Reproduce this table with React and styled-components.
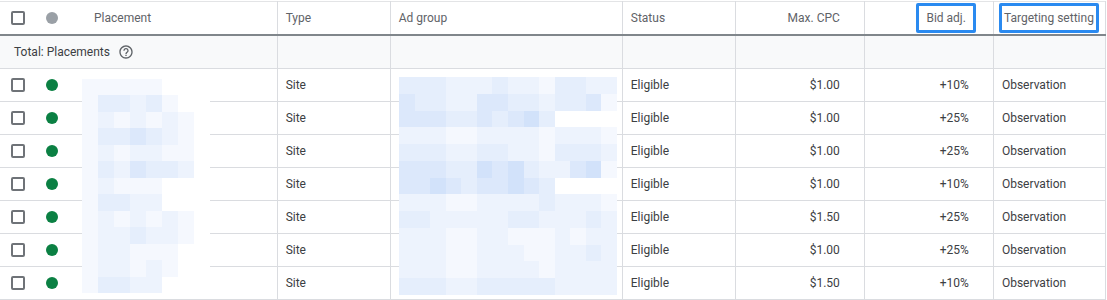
import styled, { createGlobalStyle } from 'styled-components';

const GlobalStyle = createGlobalStyle`
  body {
    margin: 0;
    background: #fff;
    font-family: Roboto, "Liberation Sans", Arial, sans-serif;
  }
`;

const rows = [
    { cpc: '$1.00', bid: '+10%' },
    { cpc: '$1.00', bid: '+25%' },
    { cpc: '$1.00', bid: '+25%' },
    { cpc: '$1.00', bid: '+10%' },
    { cpc: '$1.50', bid: '+25%' },
    { cpc: '$1.00', bid: '+25%' },
    { cpc: '$1.50', bid: '+10%' },
];

const shades = ['#ffffff', '#f5f8fe', '#edf3fd', '#e5eefc', '#dce8fb', '#d2e2fa'];

// pixelated blur that hides placement / ad group names
const placementCells = [
    '11111000',
    '13323100',
    '12121210',
    '13343210',
    '12122110',
    '13243320',
    '12111000',
    '13322000',
    '12121210',
    '12232210',
    '12211100',
    '12212100',
    '13322000',
];

const adGroupCells = [
    '33322232213322',
    '43322443323341',
    '44433434530000',
    '22211222212221',
    '33322332213332',
    '44433545322451',
    '44543445430000',
    '22211222232221',
    '33222223322232',
    '22211221112122',
    '22211222112232',
    '22211222212222',
    '33322333332222',
];

const Mosaic = ({ cells, left, top, width, height }) => (
    <MosaicGrid
        style={{ left, top, width, height }}
        $cols={cells[0].length}
        $rows={cells.length}
    >
        {cells.flatMap((row, r) =>
            row.split('').map((v, c) => <Cell key={`${r}-${c}`} $shade={shades[v]} />)
        )}
    </MosaicGrid>
);

const HelpIcon = () => (
    <svg width="16" height="16" viewBox="0 0 24 24" fill="#5f6368">
        <path d="M11 18h2v-2h-2v2zm1-16C6.48 2 2 6.48 2 12s4.48 10 10 10 10-4.48 10-10S17.52 2 12 2zm0 18c-4.41 0-8-3.59-8-8s3.59-8 8-8 8 3.59 8 8-3.59 8-8 8zm0-14c-2.21 0-4 1.79-4 4h2c0-1.1.9-2 2-2s2 .9 2 2c0 2-3 1.75-3 5h2c0-2.25 3-2.5 3-5 0-2.21-1.79-4-4-4z" />
    </svg>
);

const App = () => {
    return (
        <>
            <GlobalStyle />
            <Wrapper>
                <Table>
                    <colgroup>
                        <col style={{ width: 277 }} />
                        <col style={{ width: 113 }} />
                        <col style={{ width: 232 }} />
                        <col style={{ width: 113 }} />
                        <col style={{ width: 129 }} />
                        <col style={{ width: 129 }} />
                        <col style={{ width: 112 }} />
                    </colgroup>
                    <thead>
                        <tr>
                            <Th $first>
                                <Lead>
                                    <Checkbox />
                                    <Dot $color="#9aa0a6" />
                                    <Label>Placement</Label>
                                </Lead>
                            </Th>
                            <Th>Type</Th>
                            <Th>Ad group</Th>
                            <Th>Status</Th>
                            <Th $right>Max. CPC</Th>
                            <Th $right $pad={17}>
                                <Outlined $padX={7}>Bid adj.</Outlined>
                            </Th>
                            <Th $pad={5}>
                                <Outlined $padX={2}>Targeting setting</Outlined>
                            </Th>
                        </tr>
                    </thead>
                    <tbody>
                        <TotalRow>
                            <Td $first>
                                <TotalLabel>
                                    Total: Placements
                                    <HelpIcon />
                                </TotalLabel>
                            </Td>
                            <Td />
                            <Td />
                            <Td />
                            <Td />
                            <Td />
                            <Td />
                        </TotalRow>
                        {rows.map((row, i) => (
                            <tr key={i}>
                                <Td $first>
                                    <Lead>
                                        <Checkbox />
                                        <Dot $color="#0b8043" />
                                    </Lead>
                                </Td>
                                <Td>Site</Td>
                                <Td />
                                <Td>Eligible</Td>
                                <Td $right>{row.cpc}</Td>
                                <Td $right>{row.bid}</Td>
                                <Td>Observation</Td>
                            </tr>
                        ))}
                    </tbody>
                </Table>
                <Mosaic cells={placementCells} left={82} top={79} width={128} height={214} />
                <Mosaic cells={adGroupCells} left={399} top={77} width={218} height={218} />
            </Wrapper>
        </>
    );
};

export default App;

const Wrapper = styled.div`
  position: relative;
  padding-top: 1px;
  width: 1107px;
`;

const Table = styled.table`
  border-collapse: collapse;
  table-layout: fixed;
  width: 1106px;
  font-size: 12px;
  color: #3c4043;
  border-top: 1px solid #e3e4e6;
`;

const Th = styled.th`
  height: 32px;
  padding: 0 ${({ $right, $pad }) => ($pad ? $pad : $right ? 24 : 8)}px 0
    ${({ $first, $pad }) => ($first ? 0 : $pad ? $pad : 8)}px;
  font-weight: 400;
  color: #5f6368;
  text-align: ${({ $right }) => ($right ? 'right' : 'left')};
  vertical-align: middle;
  border-bottom: 2px solid #80868b;
  border-left: ${({ $first }) => ($first ? 'none' : '1px solid #8ab4f8')};
  border-right: 1px solid #dadce0;
  white-space: nowrap;
`;

const Td = styled.td`
  height: 32px;
  padding: 0 ${({ $right }) => ($right ? 24 : 8)}px 0 ${({ $first }) => ($first ? 0 : 8)}px;
  text-align: ${({ $right }) => ($right ? 'right' : 'left')};
  vertical-align: middle;
  border-bottom: 1px solid #dadce0;
  border-left: ${({ $first }) => ($first ? 'none' : '1px solid #dadce0')};
  border-right: 1px solid #dadce0;
  white-space: nowrap;
`;

const TotalRow = styled.tr`
  background: #f8f9fa;
`;

const Lead = styled.div`
  display: flex;
  align-items: center;
  padding-left: 11px;
`;

const Checkbox = styled.span`
  box-sizing: border-box;
  width: 14px;
  height: 14px;
  border: 2px solid #6f7378;
  border-radius: 2px;
  flex: none;
`;

const Dot = styled.span`
  width: 12px;
  height: 12px;
  border-radius: 50%;
  background: ${({ $color }) => $color};
  margin-left: 21px;
  flex: none;
`;

const Label = styled.span`
  margin-left: 36px;
`;

const TotalLabel = styled.div`
  display: flex;
  align-items: center;
  gap: 8px;
  padding-left: 14px;
  color: #3c4043;
`;

const Outlined = styled.span`
  display: inline-block;
  box-sizing: border-box;
  border: 3px solid #2a8af0;
  border-radius: 2px;
  padding: 4px ${({ $padX }) => $padX}px;
  line-height: 16px;
`;

const MosaicGrid = styled.div`
  position: absolute;
  display: grid;
  grid-template-columns: repeat(${({ $cols }) => $cols}, 1fr);
  grid-template-rows: repeat(${({ $rows }) => $rows}, 1fr);
`;

const Cell = styled.div`
  background: ${({ $shade }) => $shade};
`;
